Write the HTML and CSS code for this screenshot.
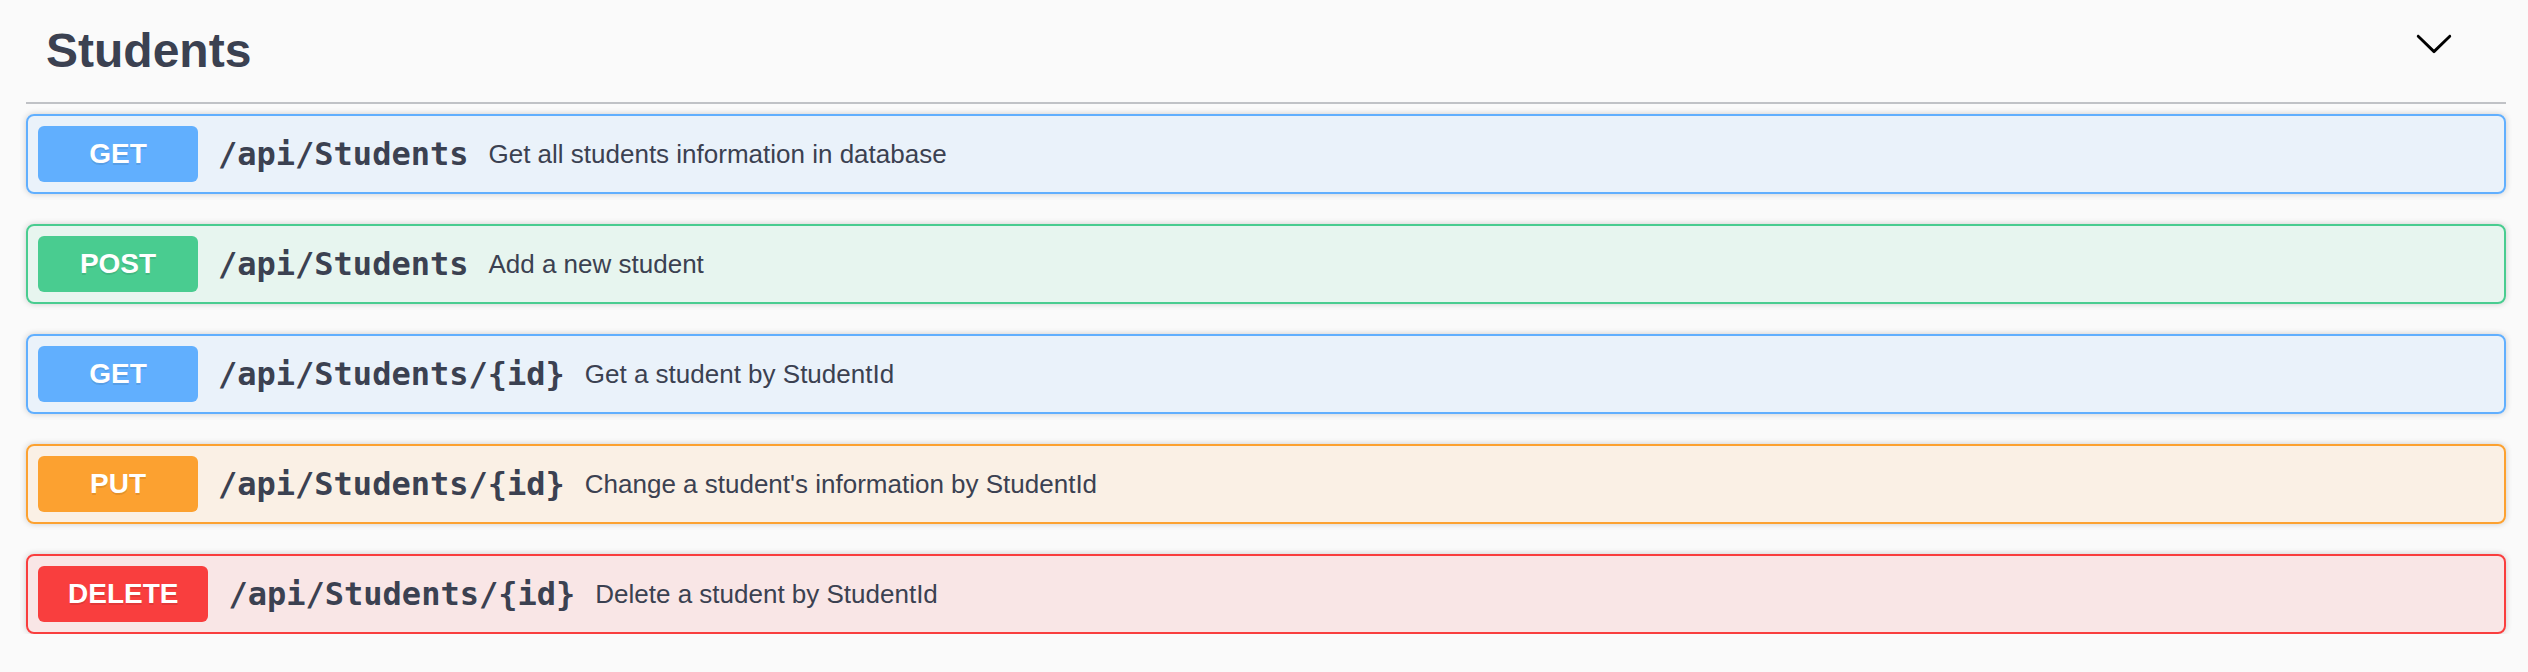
FILE: index.html
```html
<!DOCTYPE html>
<html lang="en">
<head>
<meta charset="utf-8">
<title>Students</title>
<link rel="stylesheet" href="styles.css">
</head>
<body>
<div class="section">
  <h3 class="tag">
    <span class="tag-name">Students</span>
    <svg class="arrow" width="40" height="40" viewBox="0 0 20 20" aria-hidden="true"><path d="M17.418 6.109c.272-.268.709-.268.979 0s.271.701 0 .969l-7.908 7.83c-.27.268-.707.268-.979 0l-7.908-7.83c-.27-.268-.27-.701 0-.969.271-.268.709-.268.979 0L10 13.25l7.418-7.141z"/></svg>
  </h3>
  <div class="ops">
    <div class="op op-get">
      <span class="method">GET</span>
      <span class="path">/api/Students</span>
      <span class="desc">Get all students information in database</span>
    </div>
    <div class="op op-post">
      <span class="method">POST</span>
      <span class="path">/api/Students</span>
      <span class="desc">Add a new student</span>
    </div>
    <div class="op op-get">
      <span class="method">GET</span>
      <span class="path">/api/Students/{id}</span>
      <span class="desc">Get a student by StudentId</span>
    </div>
    <div class="op op-put">
      <span class="method">PUT</span>
      <span class="path">/api/Students/{id}</span>
      <span class="desc">Change a student's information by StudentId</span>
    </div>
    <div class="op op-delete">
      <span class="method">DELETE</span>
      <span class="path">/api/Students/{id}</span>
      <span class="desc">Delete a student by StudentId</span>
    </div>
  </div>
</div>
</body>
</html>
```

FILE: styles.css
```css
html, body {
  margin: 0;
  padding: 0;
  background: #fafafa;
}

body {
  font-family: "Liberation Sans", Arial, sans-serif;
  color: #3b4151;
}

.section {
  padding: 0 22px 0 26px;
}

.tag {
  display: flex;
  align-items: center;
  box-sizing: border-box;
  height: 104px;
  margin: 0 0 10px;
  padding: 0 52px 0 20px;
  border-bottom: 2px solid rgba(59, 65, 81, 0.3);
  font-family: "Liberation Sans", Arial, sans-serif;
  font-size: 48px;
  font-weight: 700;
  color: #3b4151;
}

.tag-name {
  line-height: 56px;
}

.arrow {
  display: block;
  margin-left: auto;
  align-self: flex-start;
  margin-top: 23px;
  fill: #000;
}

.ops {
  display: flex;
  flex-direction: column;
  gap: 30px;
}

.op {
  display: flex;
  align-items: center;
  box-sizing: border-box;
  height: 80px;
  padding: 10px;
  border: 2px solid;
  border-radius: 8px;
  box-shadow: 0 0 6px rgba(0, 0, 0, 0.19);
}

.method {
  display: flex;
  align-items: center;
  justify-content: center;
  box-sizing: border-box;
  min-width: 160px;
  height: 56px;
  padding: 0 30px;
  border-radius: 6px;
  font-family: "Liberation Sans", Arial, sans-serif;
  font-size: 28px;
  font-weight: 700;
  color: #fff;
  text-shadow: 0 2px 0 rgba(0, 0, 0, 0.1);
}

.path {
  padding: 0 20px;
  font-family: "DejaVu Sans Mono", monospace;
  font-size: 32px;
  font-weight: 700;
  color: #3b4151;
  white-space: nowrap;
}

.desc {
  font-family: "Liberation Sans", Arial, sans-serif;
  font-size: 26px;
  color: #3b4151;
  white-space: nowrap;
}

.op-get {
  border-color: #61affe;
  background: rgba(97, 175, 254, 0.1);
}
.op-get .method { background: #61affe; }

.op-post {
  border-color: #49cc90;
  background: rgba(73, 204, 144, 0.1);
}
.op-post .method { background: #49cc90; }

.op-put {
  border-color: #fca130;
  background: rgba(252, 161, 48, 0.1);
}
.op-put .method { background: #fca130; }

.op-delete {
  border-color: #f93e3e;
  background: rgba(249, 62, 62, 0.1);
}
.op-delete .method { background: #f93e3e; }
```
